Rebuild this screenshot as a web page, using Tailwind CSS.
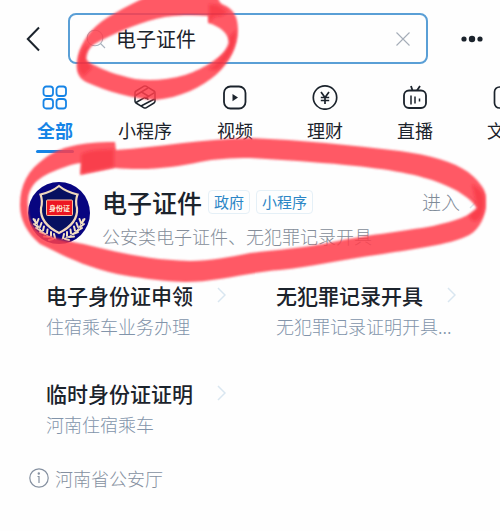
<!DOCTYPE html>
<html lang="zh-CN">
<head>
<meta charset="utf-8">
<meta name="viewport" content="width=device-width, initial-scale=1">
<title>电子证件</title>
<script src="https://cdn.jsdelivr.net/npm/@tailwindcss/browser@4"></script>
</head>
<body class="relative min-h-screen overflow-x-hidden bg-[#fefefe] font-['Noto_Sans_CJK_SC',sans-serif] text-[#1b232c]">
<header class="flex items-center pt-[13px] pr-4 pl-[26px]">
  <button type="button" aria-label="返回" class="mr-7 shrink-0">
    <svg class="block" width="14" height="26" viewBox="0 0 14 26" fill="none" stroke="#1b232c" stroke-width="2"><path d="M13 1.500 1.800 13 13 24.500"/></svg>
  </button>
  <form class="flex h-[51px] min-w-0 flex-1 items-center rounded-lg border-2 border-[#5a9fd6] pr-4 pl-4">
    <label for="q" aria-label="搜索" class="mr-2.5 shrink-0">
      <svg class="block" width="20" height="20" viewBox="0 0 20 20" fill="none" stroke="#a9b3bf" stroke-width="1.100"><circle cx="9" cy="9" r="7.800"/><path d="m14.500 14.500 4.500 4.500"/></svg>
    </label>
    <input id="q" type="text" value="电子证件" class="h-8 min-w-0 flex-1 bg-transparent text-[20px] leading-8 outline-none">
    <button type="button" aria-label="清除" class="shrink-0">
      <svg class="block" width="14" height="14" viewBox="0 0 14 14" fill="none" stroke="#a5adb8" stroke-width="1.100"><path d="m.5.5 13 13M13.500.5l-13 13"/></svg>
    </button>
  </form>
  <button type="button" aria-label="更多" class="ml-8 shrink-0">
    <svg class="block" width="24" height="8" viewBox="0 0 24 8" fill="#1b232c"><circle cx="4" cy="4" r="2.600"/><circle cx="12" cy="4" r="3.200"/><circle cx="20" cy="4" r="2.600"/></svg>
  </button>
</header>

<nav class="mt-5 flex overflow-hidden pl-[10px] text-[18px] leading-6">
  <a href="#" class="flex w-[90px] shrink-0 flex-col items-center gap-2 font-bold text-[#1684e6]">
    <svg width="26" height="26" viewBox="0 0 26 26" fill="none" stroke="currentColor" stroke-width="1.800"><rect x="1.500" y="2.500" width="9.500" height="9.500" rx="2.800"/><rect x="14.500" y="2.500" width="9.500" height="9.500" rx="2.800"/><rect x="1.500" y="15" width="9.500" height="9.500" rx="2.800"/><rect x="14.500" y="15" width="9.500" height="9.500" rx="2.800"/></svg>
    <span>全部</span>
    <span class="h-[3px] w-[38px] rounded-full bg-[#1684e6]"></span>
  </a>
  <a href="#" class="flex w-[90px] shrink-0 flex-col items-center gap-2">
    <svg width="26" height="26" viewBox="0 0 26 26" fill="none" stroke="currentColor" stroke-width="1.500" stroke-linejoin="round"><path d="M12 2.200Q13 1.700 14 2.200L22 7Q23 7.600 23 8.700V17.300Q23 18.400 22 19L14 23.800Q13 24.300 12 23.800L4 19Q3 18.400 3 17.300V8.700Q3 7.600 4 7Z"/><path d="M3.500 11.500 16 4M9.500 8l7.500 4.500M13 14.500 22.500 8.700M4 18.500l9-5.200 3.500 2.200M9 22l13.500-7"/></svg>
    <span>小程序</span>
  </a>
  <a href="#" class="flex w-[90px] shrink-0 flex-col items-center gap-2">
    <svg width="26" height="26" viewBox="0 0 26 26" fill="none" stroke="currentColor" stroke-width="1.800"><rect x="2" y="2.500" width="21.500" height="22" rx="6.500"/><path d="m10.500 10 5.500 3.600-5.500 3.600Z" fill="currentColor" stroke="none"/></svg>
    <span>视频</span>
  </a>
  <a href="#" class="flex w-[90px] shrink-0 flex-col items-center gap-2">
    <svg width="26" height="26" viewBox="0 0 26 26" fill="none" stroke="currentColor" stroke-width="1.700"><circle cx="13" cy="13.500" r="11.700"/><path d="m9 8 4 5.500L17 8M13 13.500V20M8.800 13.500h8.400M8.800 16.500h8.400"/></svg>
    <span>理财</span>
  </a>
  <a href="#" class="flex w-[90px] shrink-0 flex-col items-center gap-2">
    <svg width="26" height="26" viewBox="0 0 26 26" fill="none" stroke="currentColor" stroke-width="1.800"><rect x="2" y="6.500" width="22" height="17.500" rx="5"/><path d="m9 2 1.500 4.500M18 2l-3 4.500"/><path d="M9 11.500v9M13 12.500v7M17.500 14.500v3" stroke-width="1.500"/></svg>
    <span>直播</span>
  </a>
  <a href="#" class="flex w-[90px] shrink-0 flex-col items-center gap-2">
    <svg width="26" height="26" viewBox="0 0 26 26" fill="none" stroke="currentColor" stroke-width="1.700"><rect x="2.500" y="3" width="21" height="21" rx="5"/><path d="M8 9.500h10M8 13.500h10M8 17.500h6"/></svg>
    <span>文章</span>
  </a>
</nav>

<main>
  <section class="mt-[29px] flex items-start pr-[18px] pl-7">
    <svg class="mr-3 shrink-0" width="62" height="62" viewBox="0 0 62 62" role="img" aria-label="身份证">
      <circle cx="31" cy="31" r="31" fill="#080580"/>
      <path d="M31 4C26 8 19 11 12.500 12.500Q15 19 13 26C12 38 21 46 31 51C41 46 50 38 49 26Q47 19 49.500 12.500C43 11 36 8 31 4Z" fill="#071060" stroke="#f1d9bc" stroke-width="2.200"/>
      <rect x="18.500" y="18" width="26" height="15.500" rx="1" fill="#ed1621" stroke="#ffc1a4"/>
      <text x="31.500" y="28.500" text-anchor="middle" font-size="7" font-weight="700" fill="#fff0dc">身份证</text>
      <g fill="none" stroke="#f3e2c4" stroke-width="2" stroke-linecap="round">
        <path d="M7 37C11 49 18 55 28 57" stroke-width="1"/>
        <path d="m8 41-2.500-4M10 45l-4-3M13 49l-5-3M17 52l-5-2M21 55l-5-.5M25 57l-4 1M9 41l1.500-4M12 45l1.500-4M15 48.500l1-4M19 51.500l.5-4M23 54l0-4M27 56l-1-4"/>
        <path d="M55 37C51 49 44 55 34 57" stroke-width="1"/>
        <path d="m54 41 2.500-4M52 45l4-3M49 49l5-3M45 52l5-2M41 55l5-.5M37 57l4 1M53 41l-1.500-4M50 45l-1.500-4M47 48.500l-1-4M43 51.500l-.5-4M39 54l0-4M35 56l1-4"/>
      </g>
    </svg>
    <div class="min-w-0 flex-1 pt-0.5">
      <div class="flex items-center">
        <h1 class="text-[25px] leading-9 font-medium">电子证件</h1>
        <span class="ml-1.5 rounded-sm border border-[#e5f0f7] px-[5px] text-[15px] leading-[22px] text-[#2c86c6]">政府</span>
        <span class="ml-1.5 rounded-sm border border-[#e5f0f7] px-[5px] text-[15px] leading-[22px] text-[#2c86c6]">小程序</span>
        <a href="#" class="ml-auto flex items-center gap-2 text-[19px] leading-8 font-light text-[#7f8b98]">进入
          <svg width="14" height="14" viewBox="0 0 14 14" fill="none" stroke="#dce5ed" stroke-width="1.500"><path d="m2 1 6 6-6 6"/></svg>
        </a>
      </div>
      <p class="mt-1 text-[18px] leading-6 font-light whitespace-nowrap text-[#848d99]">公安类电子证件、无犯罪记录开具</p>
    </div>
  </section>

  <section class="mt-8 grid grid-cols-2 gap-x-1.5 gap-y-10 pl-[46px]">
    <a href="#" class="block">
      <h2 class="flex items-center gap-6 text-[21px] leading-[30px] font-medium whitespace-nowrap">电子身份证申领
        <svg width="9" height="16" viewBox="0 0 9 16" fill="none" stroke="#d9e6f0" stroke-width="1.500"><path d="m1 1 7 7-7 7"/></svg>
      </h2>
      <p class="mt-1 text-[18px] leading-6 font-light whitespace-nowrap text-[#8294aa]">住宿乘车业务办理</p>
    </a>
    <a href="#" class="block">
      <h2 class="flex items-center gap-6 text-[21px] leading-[30px] font-medium whitespace-nowrap">无犯罪记录开具
        <svg width="9" height="16" viewBox="0 0 9 16" fill="none" stroke="#d9e6f0" stroke-width="1.500"><path d="m1 1 7 7-7 7"/></svg>
      </h2>
      <p class="mt-1 text-[18px] leading-6 font-light whitespace-nowrap text-[#8294aa]">无犯罪记录证明开具...</p>
    </a>
    <a href="#" class="block">
      <h2 class="flex items-center gap-6 text-[21px] leading-[30px] font-medium whitespace-nowrap">临时身份证证明
        <svg width="9" height="16" viewBox="0 0 9 16" fill="none" stroke="#d9e6f0" stroke-width="1.500"><path d="m1 1 7 7-7 7"/></svg>
      </h2>
      <p class="mt-1 text-[18px] leading-6 font-light whitespace-nowrap text-[#8294aa]">河南住宿乘车</p>
    </a>
  </section>
</main>

<footer class="mt-[30px] flex items-center gap-1.5 pl-[29px] text-[18px] leading-6 font-light text-[#8590a0]">
  <svg width="20" height="20" viewBox="0 0 20 20" fill="none" stroke="currentColor" stroke-width="1.200"><circle cx="10" cy="10" r="9.200"/><path d="M8.500 8.500H10V15"/><circle cx="9.800" cy="5.500" r=".6" fill="currentColor"/></svg>
  河南省公安厅
</footer>

<!-- Hand-drawn marker rings -->
<svg class="pointer-events-none absolute top-0 left-0" width="500" height="300" viewBox="0 0 500 300" aria-hidden="true">
  <defs>
    <filter id="edge"><feGaussianBlur stdDeviation=".9"/></filter>
    <filter id="ink" x="-30%" y="-30%" width="160%" height="160%"><feGaussianBlur stdDeviation="1.800"/></filter>
  </defs>
  <g fill="#ff3c4a" fill-opacity=".85" fill-rule="evenodd" filter="url(#edge)">
    <path d="M77 62C78 47 88 32 101 22C115 12 132 4 150 -5H217C219 2 221 4 224 5C234 9 238 18 238 30C238 46 230 62 217 74C202 87 180 98 155 100C133 99 106 91 86 82C78 78 76 71 77 62ZM86 58C87 49 92 45 100 41C120 31 143 21 165 17C180 15 195 15 208 16V23C220 26 229 34 229 43C226 55 204 69 185 75C168 80 150 81 135 79C117 75 103 70 94 65C88 62 86 61 86 58Z"/>
    <path d="M20 205C20 185 28 170 45 158C60 147 80 142 115 142L116 150C160 147 200 139 250 138C300 140 350 145 400 151C430 155 454 162 468 172C477 179 485 188 486 196V208C484 220 477 233 465 237C450 244 415 249 383 254C345 259 310 267 280 270C250 272 215 282 185 282C155 281 135 277 117 274C85 267 60 254 40 244C27 233 20 220 20 205ZM28 207C26 187 38 178 52 172C62 168 71 164 81 163L80 175L115 168C150 171 175 167 200 162C215 159 230 158 250 158C280 160 315 162 345 165C390 169 420 175 440 183C458 190 470 198 477 208C470 216 455 221 433 226C405 231 360 236 333 242C305 248 275 250 250 253C230 257 210 261 190 261C155 260 130 255 100 248C78 242 55 240 40 232C31 226 28 218 28 207Z"/>
  </g>
  <g fill="#f01824" fill-opacity=".4" filter="url(#ink)">
    <path d="M209 4L218 5L228 12L222 16L215 17L209 22Z"/>
    <path d="M81 154C90 149 102 150 114 149V167L81 174Z"/>
    <path d="M472 184C479 188 484 192 484 198C485 208 483 216 478 220C474 223 470 220 469 215L477 208Z"/>
    <path d="M78 66C78 56 82 47 88 44C90 48 86 53 86 59L92 68L84 76Q78 72 78 66Z"/>
    <path d="M229 37L236 30C237 45 232 56 218 70L208 70Q230 52 229 37Z"/>
  </g>
</svg>
</body>
</html>
